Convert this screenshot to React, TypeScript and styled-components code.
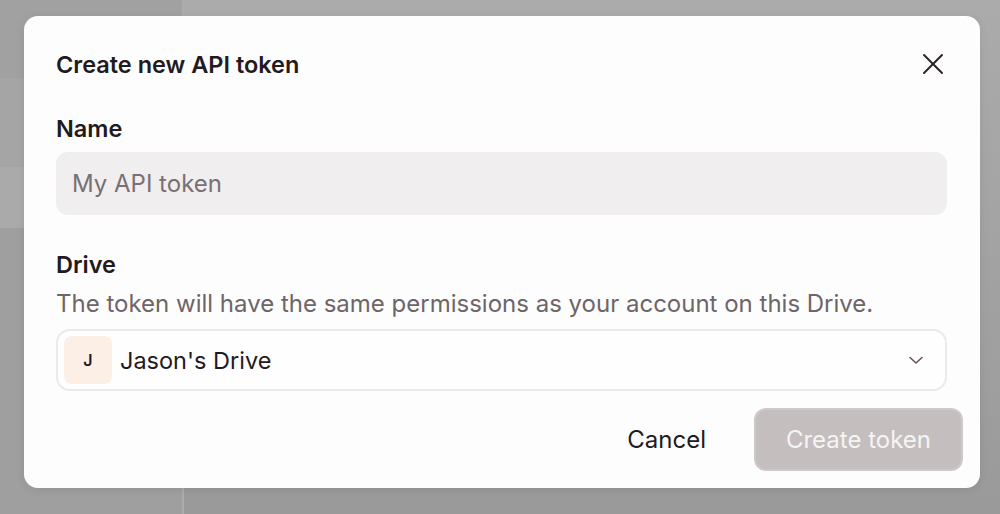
import styled, { createGlobalStyle } from 'styled-components'

const GlobalStyle = createGlobalStyle`
  html, body {
    margin: 0;
    padding: 0;
    height: 100%;
  }
  body {
    font-family: Inter, "Noto Sans", "Liberation Sans", sans-serif;
    -webkit-font-smoothing: antialiased;
  }
  #root {
    height: 100%;
  }
  * {
    box-sizing: border-box;
  }
`

const Page = styled.div`
  position: relative;
  width: 100%;
  height: 514px;
  display: flex;
  overflow: hidden;
  background: #a8a8a8;
`

const Sidebar = styled.aside`
  width: 184px;
  display: flex;
  flex-direction: column;
  background: #a2a2a2;
  border-right: 2px solid #acacac;
`

const SideRow = styled.div<{ $h: number; $bg: string }>`
  height: ${(p) => p.$h}px;
  background: ${(p) => p.$bg};
`

const Main = styled.main`
  flex: 1;
  background: linear-gradient(#ababab, #9b9a9a);
`

const Overlay = styled.div`
  position: absolute;
  inset: 0;
  padding: 16px 20px 26px 24px;
  display: flex;
  align-items: flex-start;
`

const Dialog = styled.div`
  width: 956px;
  height: 472px;
  background: #fdfdfd;
  border-radius: 14px;
  padding: 32px 17px 17px 32px;
  display: flex;
  flex-direction: column;
  box-shadow: 0 2px 10px rgba(0, 0, 0, 0.08);
`

const Header = styled.div`
  display: flex;
  justify-content: space-between;
  align-items: center;
  height: 32px;
  padding-right: 18px;
`

const Title = styled.h2`
  margin: 0;
  font-size: 23.5px;
  font-weight: 600;
  color: #221a1e;
`

const CloseButton = styled.button`
  border: none;
  background: transparent;
  padding: 0;
  width: 24px;
  height: 24px;
  display: flex;
  align-items: center;
  justify-content: center;
  color: #2a2226;
  cursor: pointer;
`

const Body = styled.div`
  display: flex;
  flex-direction: column;
  padding-right: 16px;
`

const Label = styled.div<{ $top: number }>`
  margin-top: ${(p) => p.$top}px;
  font-size: 23.5px;
  line-height: 28px;
  font-weight: 600;
  color: #221a1e;
`

const Hint = styled.div`
  margin-top: 11px;
  font-size: 24px;
  line-height: 28px;
  color: #6d6567;
`

const TextInput = styled.input`
  margin-top: 9px;
  height: 63px;
  border: none;
  outline: none;
  border-radius: 12px;
  background: #f0eeee;
  padding: 0 16px;
  font-family: inherit;
  font-size: 24px;
  color: #221a1e;
  &::placeholder {
    color: #7a7073;
  }
`

const Select = styled.div`
  margin-top: 11px;
  height: 62px;
  border: 2px solid #ebe9e9;
  border-radius: 14px;
  background: #fefefe;
  display: flex;
  align-items: center;
  padding: 0 22px 0 6px;
  gap: 8px;
`

const Avatar = styled.div`
  width: 48px;
  height: 48px;
  border-radius: 8px;
  background: #fcefe6;
  display: flex;
  align-items: center;
  justify-content: center;
  font-size: 16px;
  font-weight: 600;
  color: #221a1e;
`

const SelectText = styled.span`
  flex: 1;
  font-size: 23.5px;
  color: #221a1e;
`

const Footer = styled.div`
  margin-top: 17px;
  display: flex;
  justify-content: flex-end;
  align-items: center;
  gap: 24px;
`

const Button = styled.button<{ $primary?: boolean }>`
  height: 63px;
  border-radius: 12px;
  font-family: inherit;
  font-size: 24px;
  cursor: pointer;
  padding: 0 ${(p) => (p.$primary ? '30px' : '24px')};
  border: ${(p) => (p.$primary ? '2px solid #cdc8c9' : 'none')};
  background: ${(p) => (p.$primary ? '#c4bebf' : 'transparent')};
  color: ${(p) => (p.$primary ? '#f6f4f4' : '#221a1e')};
`

export default function App() {
  return (
    <>
      <GlobalStyle />
      <Page>
        <Sidebar>
          <SideRow $h={78} $bg="#a1a1a1" />
          <SideRow $h={89} $bg="#a5a5a5" />
          <SideRow $h={61} $bg="#aaaaaa" />
          <SideRow $h={286} $bg="#9f9f9f" />
        </Sidebar>
        <Main />
        <Overlay>
          <Dialog>
            <Header>
              <Title>Create new API token</Title>
              <CloseButton aria-label="Close">
                <svg width="22" height="22" viewBox="0 0 22 22" fill="none" stroke="currentColor" strokeWidth="2" strokeLinecap="round">
                  <line x1="2" y1="2" x2="20" y2="20" />
                  <line x1="20" y1="2" x2="2" y2="20" />
                </svg>
              </CloseButton>
            </Header>
            <Body>
              <Label $top={35}>Name</Label>
              <TextInput placeholder="My API token" />
              <Label $top={36}>Drive</Label>
              <Hint>The token will have the same permissions as your account on this Drive.</Hint>
              <Select>
                <Avatar>J</Avatar>
                <SelectText>Jason's Drive</SelectText>
                <svg width="14" height="14" viewBox="0 0 14 14" fill="none" stroke="#6e4f5a" strokeWidth="1.6" strokeLinecap="round" strokeLinejoin="round">
                  <polyline points="1,4.5 7,10 13,4.5" />
                </svg>
              </Select>
            </Body>
            <Footer>
              <Button>Cancel</Button>
              <Button $primary>Create token</Button>
            </Footer>
          </Dialog>
        </Overlay>
      </Page>
    </>
  )
}
